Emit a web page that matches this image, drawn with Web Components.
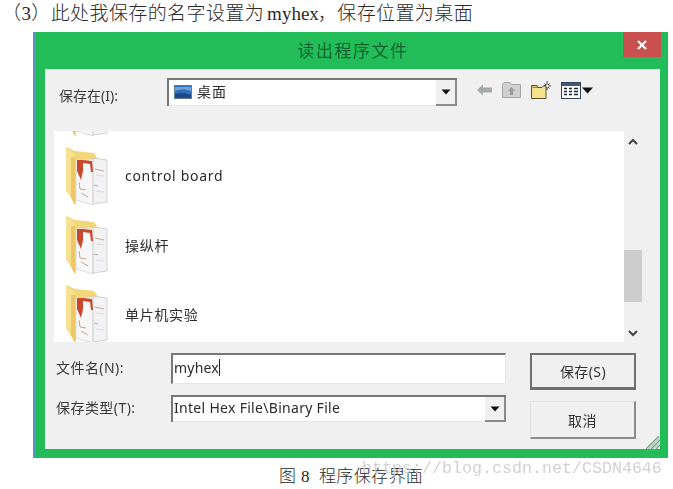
<!DOCTYPE html>
<html>
<head>
<meta charset="utf-8">
<style>
  html, body { margin: 0; background: #fff; }
  body { width: 673px; height: 489px; overflow: hidden; position: relative; }
</style>
</head>
<body>
<doc-line>（3）此处我保存的名字设置为<span style="letter-spacing:0;margin:0 -1px 0 3px">myhex</span>，保存位置为桌面</doc-line>
<file-dialog heading="读出程序文件">
  <dialog-toolbar slot="toolbar" label="保存在(I):" value="桌面"></dialog-toolbar>
  <folder-list slot="list">
    <folder-row></folder-row>
    <folder-row>control board</folder-row>
    <folder-row>操纵杆</folder-row>
    <folder-row>单片机实验</folder-row>
  </folder-list>
  <dialog-form slot="form"></dialog-form>
</file-dialog>
<doc-caption>图 8&nbsp;&nbsp;程序保存界面</doc-caption>
<water-mark>https://blog.csdn.net/CSDN4646</water-mark>

<script>
const UI_FONT = '"Noto Sans", "Noto Sans CJK SC", sans-serif';
const DOC_FONT = '"Liberation Serif", "Noto Sans CJK SC", serif';

class DocLine extends HTMLElement {
  constructor() {
    super();
    this.attachShadow({ mode: 'open' }).innerHTML = `
      <style>
        :host {
          display: block;
          height: 32px;
          box-sizing: border-box;
          padding: 2px 0 0 2px;
          font: 19px/24px ${DOC_FONT};
          color: #2a2a2a;
          letter-spacing: 0.4px;
          white-space: nowrap;
          font-weight: 300;
        }
      </style>
      <slot></slot>`;
  }
}

class DocCaption extends HTMLElement {
  constructor() {
    super();
    this.attachShadow({ mode: 'open' }).innerHTML = `
      <style>
        :host {
          display: block;
          margin-top: 8px;
          padding-left: 279px;
          font: 17px/22px ${DOC_FONT};
          color: #2a2a2a;
          letter-spacing: 0.35px;
          font-weight: 300;
          white-space: nowrap;
        }
      </style>
      <slot></slot>`;
  }
}

class WaterMark extends HTMLElement {
  constructor() {
    super();
    this.attachShadow({ mode: 'open' }).innerHTML = `
      <style>
        :host {
          position: absolute;
          left: 362px;
          top: 459px;
          font: 16.67px/20px "Liberation Mono", monospace;
          color: #cdcdcd;
          opacity: 0.9;
          white-space: nowrap;
        }
      </style>
      <slot></slot>`;
  }
}

class FileDialog extends HTMLElement {
  constructor() {
    super();
    this.attachShadow({ mode: 'open' }).innerHTML = `
      <style>
        :host {
          width: 635px;
          height: 426px;
          margin-left: 33px;
          box-sizing: border-box;
          background: #22bd58;
          border-left: 3px solid #5a93c4;
          position: relative;
          filter: blur(0.35px);
          font-family: ${UI_FONT};
          display: flex;
          flex-direction: column;
        }
        .title {
          height: 37px;
          flex: none;
          display: flex;
          align-items: center;
          justify-content: center;
          padding: 0 0 3px 2px;
          box-sizing: border-box;
          font-size: 17px;
          letter-spacing: 1.5px;
          color: #14602f;
        }
        .close {
          position: absolute;
          right: 7px;
          top: 0;
          width: 38px;
          height: 25px;
          background: #c9504f;
          display: flex;
          align-items: center;
          justify-content: center;
        }
        .client {
          flex: none;
          margin-left: 9px;
          width: 615px;
          height: 380px;
          box-sizing: border-box;
          background: #f0f0f0;
          position: relative;
          padding: 9px 18px 0 9px;
          display: flex;
          flex-direction: column;
        }
        .grip {
          position: absolute;
          right: 0;
          bottom: 0;
        }
      </style>
      <div class="title">${this.getAttribute('heading')}</div>
      <div class="close">
        <svg width="12" height="12" viewBox="0 0 12 12"><path d="M2 2 10 10M10 2 2 10" stroke="#fff" stroke-width="2.2" fill="none"/></svg>
      </div>
      <div class="client">
        <slot name="toolbar"></slot>
        <slot name="list"></slot>
        <slot name="form"></slot>
        <svg class="grip" width="14" height="13" viewBox="0 0 14 13">
          <path d="M0 13 13 0M5 13 14 4M10 13 14 9" stroke="#8a9a90" stroke-width="1.4" fill="none"/>
          <path d="M2.5 13 14 1.5M7.5 13 14 6.5" stroke="#5fcf85" stroke-width="1" fill="none"/>
        </svg>
      </div>`;
  }
}

class WinCombo extends HTMLElement {
  constructor() {
    super();
    this.attachShadow({ mode: 'open' }).innerHTML = `
      <style>
        :host {
          display: flex;
          box-sizing: border-box;
          border-top: 2px solid #777;
          border-left: 2px solid #777;
          background: #fff;
          font-size: 14px;
          color: #2b2b2b;
          align-items: stretch;
        }
        .text {
          flex: 1;
          display: flex;
          align-items: center;
          gap: 5px;
          padding: 0 0 3px 1px;
          border-bottom: 1px solid #e6e6e6;
          white-space: nowrap;
          letter-spacing: 0.3px;
        }
        .drop {
          width: 19px;
          background: #f0f0f0;
          border-right: 2px solid #8a8a8a;
          border-bottom: 2px solid #8a8a8a;
          display: flex;
          align-items: center;
          justify-content: center;
        }
      </style>
      <div class="text"><slot></slot></div>
      <div class="drop">
        <svg width="10" height="6" viewBox="0 0 10 6"><path d="M0.5 0.5H9.5L5 5.5Z" fill="#111"/></svg>
      </div>`;
  }
}

class DialogToolbar extends HTMLElement {
  constructor() {
    super();
    this.attachShadow({ mode: 'open' }).innerHTML = `
      <style>
        :host {
          display: flex;
          align-items: center;
          height: 28px;
          flex: none;
          margin-bottom: 25px;
          font-size: 14px;
          color: #3a3a3a;
        }
        .label { width: 113px; padding-left: 5px; padding-top: 6px; box-sizing: border-box; white-space: nowrap; }
        win-combo { width: 290px; height: 28px; }
        .desk { margin: 2px 0 0 4px; }
        .value { letter-spacing: 1px; }
        .tools { display: flex; align-items: center; margin-left: 20px; gap: 10px; padding-bottom: 4px; }
        .views { display: flex; align-items: center; gap: 1px; }
      </style>
      <div class="label">${this.getAttribute('label')}</div>
      <win-combo>
        <svg class="desk" width="18" height="14" viewBox="0 0 18 14">
          <rect x="0.5" y="0.5" width="17" height="13" fill="#2f6fb5" stroke="#5d7a99"/>
          <path d="M1 9C6 7 12 8 17 10V13H1Z" fill="#1c4a88"/>
          <path d="M1 2H17V6C12 4 6 4 1 6Z" fill="#6aa5dd"/>
        </svg>
        <span class="value">${this.getAttribute('value')}</span>
      </win-combo>
      <div class="tools">
        <svg width="15" height="12" viewBox="0 0 15 12"><path d="M0 6 6 0.5V3.5H15V8.5H6V11.5Z" fill="#a3aaa8"/></svg>
        <svg width="19" height="16" viewBox="0 0 19 16">
          <path d="M0.5 15.5V2.5L2 0.5H8L9.5 2.5H18.5V15.5Z" fill="#cfcfcf" stroke="#a6a6a6"/>
          <path d="M9.5 5 6 9H8V13H11V9H13Z" fill="#9a9a9a"/>
        </svg>
        <svg width="20" height="18" viewBox="0 0 20 18">
          <path d="M0.5 17.5V6.5H11L13 4.5H15V17.5Z" fill="#f4e38a" stroke="#5b5230"/>
          <path d="M0.5 6.5V4.5H6L7 6.5" fill="#d9c56a" stroke="#5b5230"/>
          <path d="M16 0V4M16 6V9M12.5 5H14.5M17.5 5H20M13.5 2.5 15 4M18.5 2.5 17 4M18.5 7.5 17 6" stroke="#333" stroke-width="0.9" fill="none"/>
        </svg>
        <div class="views">
          <svg width="20" height="17" viewBox="0 0 20 17">
            <rect x="0.5" y="0.5" width="19" height="16" fill="#fff" stroke="#33445a"/>
            <rect x="1" y="1" width="18" height="3" fill="#3d5878"/>
            <path d="M3 6.5H6M8 6.5H11M13 6.5H17M3 9.5H6M8 9.5H11M13 9.5H17M3 12.5H6M8 12.5H11M13 12.5H17" stroke="#1b2533" stroke-width="1.6" fill="none"/>
          </svg>
          <svg width="11" height="7" viewBox="0 0 11 7"><path d="M0 0.5H11L5.5 6.5Z" fill="#111"/></svg>
        </div>
      </div>`;
  }
}

class FolderList extends HTMLElement {
  constructor() {
    super();
    this.attachShadow({ mode: 'open' }).innerHTML = `
      <style>
        :host {
          display: flex;
          height: 211px;
          flex: none;
          margin-bottom: 11px;
        }
        .rows {
          flex: 1;
          background: #fff;
          overflow: hidden;
        }
        .inner { margin-top: -53px; }
        .bar {
          width: 18px;
          display: flex;
          flex-direction: column;
          align-items: center;
          padding: 7px 0 5px;
          box-sizing: border-box;
        }
        .thumb {
          width: 18px;
          height: 52px;
          margin: 105px 0 0;
          background: #cdcdcd;
        }
        .down { margin-top: auto; }
      </style>
      <div class="rows"><div class="inner"><slot></slot></div></div>
      <div class="bar">
        <svg width="10" height="7" viewBox="0 0 10 7"><path d="M1 6 5 2 9 6" stroke="#444" stroke-width="2" fill="none"/></svg>
        <div class="thumb"></div>
        <svg class="down" width="10" height="7" viewBox="0 0 10 7"><path d="M1 1 5 5 9 1" stroke="#444" stroke-width="2" fill="none"/></svg>
      </div>`;
  }
}

class FolderRow extends HTMLElement {
  constructor() {
    super();
    this.attachShadow({ mode: 'open' }).innerHTML = `
      <style>
        :host {
          display: flex;
          height: 69px;
          box-sizing: border-box;
          padding: 0 0 11px 12px;
          align-items: center;
          font-size: 14px;
          letter-spacing: 0.7px;
          color: #2b2b2b;
        }
        svg { flex: none; margin-right: 17px; }
        .name { padding-bottom: 1px; white-space: nowrap; }
      </style>
      <svg width="42" height="58" viewBox="0 0 42 58">
        <path d="M0 0 9 4 28 6 33 13 12 12 10 58 0 43Z" fill="#f3d677"/>
        <path d="M0 0 9 7V58L0 43Z" fill="#f7e08f"/>
        <path d="M5 10 9 10V58L5 50Z" fill="#ecc763"/>
        <path d="M10 13 27 12V58L10 53Z" fill="#f7f7f7" stroke="#d4d4d4" stroke-width="0.8"/>
        <path d="M27 11 41 13V55L27 57Z" fill="#f2f2f4" stroke="#c9c9c9" stroke-width="0.8"/>
        <path d="M11 13H17V24L15 33 11 24Z" fill="#c9482a"/>
        <path d="M17 13 26 14 27 25H25L24 17 17 16Z" fill="#c9482a"/>
        <path d="M13 35 14 42 20 43M28 38 32 39M29 22 38 24M15 46 22 50" stroke="#c9a58e" stroke-width="1" fill="none"/>
        <path d="M30 28 38 29M30 44 38 45" stroke="#dcdcdc" stroke-width="1" fill="none"/>
      </svg>
      <span class="name"><slot></slot></span>`;
  }
}

class WinButton extends HTMLElement {
  constructor() {
    super();
    this.attachShadow({ mode: 'open' }).innerHTML = `
      <style>
        :host {
          display: flex;
          align-items: center;
          justify-content: center;
          box-sizing: border-box;
          width: 106px;
          height: 37px;
          font-size: 14px;
          letter-spacing: 0.4px;
          color: #333;
          background: #f0f0f0;
          border: 1px solid #e2e2e2;
          border-right: 2px solid #8c8c8c;
          border-bottom: 2px solid #8c8c8c;
        }
        :host([primary]) {
          border: 2px solid #707070;
          border-bottom-width: 3px;
        }
      </style>
      <slot></slot>`;
  }
}

class DialogForm extends HTMLElement {
  constructor() {
    super();
    this.attachShadow({ mode: 'open' }).innerHTML = `
      <style>
        :host {
          display: grid;
          grid-template-columns: 115px 335px auto;
          grid-template-rows: 31px 38px;
          font-size: 14px;
          letter-spacing: 0.45px;
          color: #3a3a3a;
          padding-left: 2px;
        }
        .label { display: flex; align-items: center; white-space: nowrap; padding-bottom: 3px; }
        .input {
          box-sizing: border-box;
          height: 31px;
          border-top: 2px solid #777;
          border-left: 2px solid #777;
          border-bottom: 1px solid #e6e6e6;
          border-right: 1px solid #e6e6e6;
          background: #fff;
          display: flex;
          align-items: center;
          padding: 0 0 3px 1px;
          color: #2b2b2b;
          letter-spacing: 0.2px;
        }
        .caret { width: 1px; height: 17px; background: #222; margin-left: 0; }
        win-combo { height: 27px; margin-top: 11px; }
        .label.second { margin-top: 11px; height: 27px; box-sizing: border-box; }
        .actions {
          grid-column: 3;
          grid-row: 1 / span 2;
          margin-left: 24px;
          width: 106px;
          height: 86px;
          display: flex;
          flex-direction: column;
          gap: 11px;
        }
        .actions win-button:last-child { height: 38px; }
      </style>
      <div class="label">文件名(N):</div>
      <div class="input">myhex<span class="caret"></span></div>
      <div class="label second">保存类型(T):</div>
      <win-combo>Intel Hex File\\Binary File</win-combo>
      <div class="actions">
        <win-button primary>保存(S)</win-button>
        <win-button>取消</win-button>
      </div>`;
  }
}

customElements.define('doc-line', DocLine);
customElements.define('doc-caption', DocCaption);
customElements.define('water-mark', WaterMark);
customElements.define('win-combo', WinCombo);
customElements.define('win-button', WinButton);
customElements.define('dialog-toolbar', DialogToolbar);
customElements.define('folder-row', FolderRow);
customElements.define('folder-list', FolderList);
customElements.define('dialog-form', DialogForm);
customElements.define('file-dialog', FileDialog);
</script>
</body>
</html>
